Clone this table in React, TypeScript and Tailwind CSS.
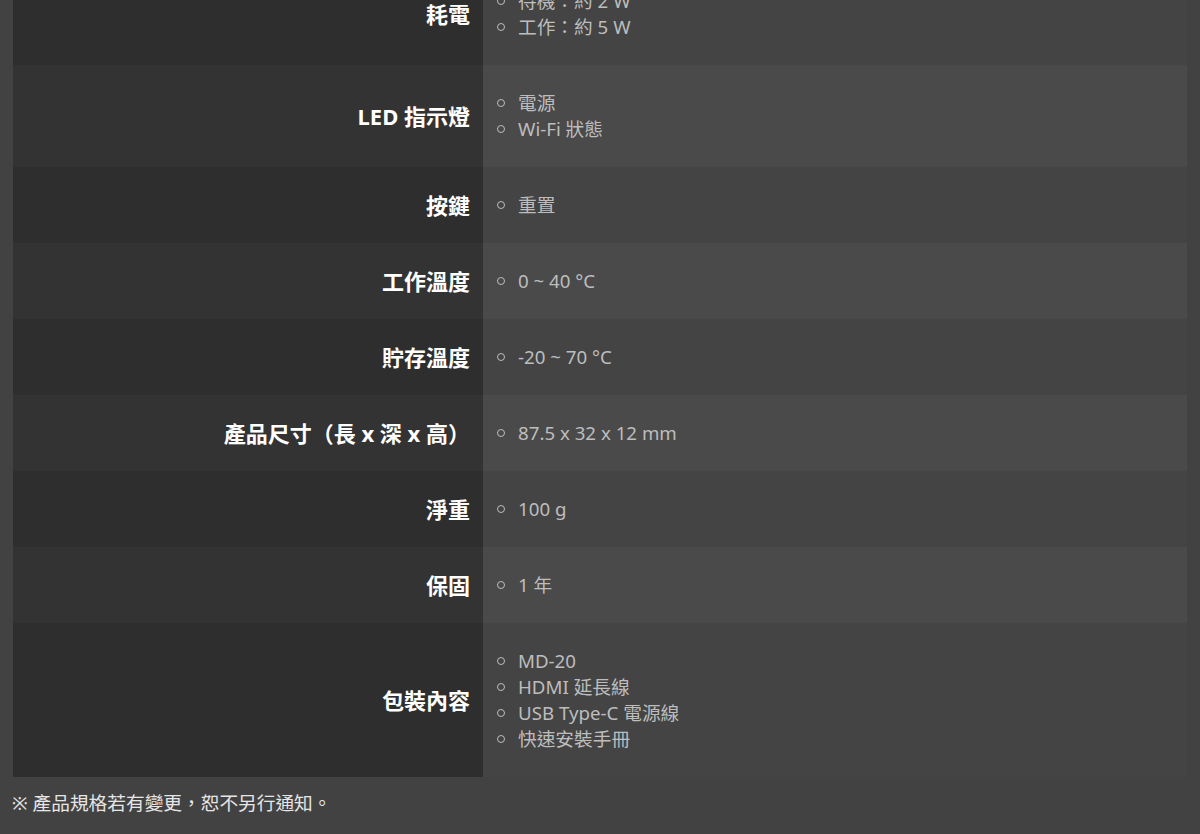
const rows: { label: string; items: string[] }[] = [
  { label: '耗電', items: ['待機：約 2 W', '工作：約 5 W'] },
  { label: 'LED 指示燈', items: ['電源', 'Wi-Fi 狀態'] },
  { label: '按鍵', items: ['重置'] },
  { label: '工作溫度', items: ['0 ~ 40 °C'] },
  { label: '貯存溫度', items: ['-20 ~ 70 °C'] },
  { label: '產品尺寸（長 x 深 x 高）', items: ['87.5 x 32 x 12 mm'] },
  { label: '淨重', items: ['100 g'] },
  { label: '保固', items: ['1 年'] },
  { label: '包裝內容', items: ['MD-20', 'HDMI 延長線', 'USB Type-C 電源線', '快速安裝手冊'] },
];

export default function App() {
  return (
    <div
      className="h-[834px] overflow-hidden bg-[#424242]"
      style={{ fontFamily: '"Noto Sans", "Noto Sans CJK TC", sans-serif' }}
    >
      {/* page is scrolled: the first row sits partly above the top edge */}
      <div className="-mt-[37px] mx-[13px]">
        {rows.map((row, i) => (
          <div key={row.label} className="flex">
            <div
              className={`w-[470px] shrink-0 flex items-center justify-end pr-[13px] text-[22px] font-bold text-white ${
                i % 2 === 1 ? 'bg-[#333333]' : 'bg-[#2e2e2e]'
              }`}
            >
              {row.label}
            </div>
            <ul
              className={`flex-1 py-[25px] pl-[14px] text-[18.7px] leading-[26px] text-[#bdbdbd] ${
                i % 2 === 1 ? 'bg-[#4a4a4a]' : 'bg-[#444444]'
              }`}
            >
              {row.items.map((item) => (
                <li key={item} className="flex items-center">
                  <span className="w-[8px] h-[8px] rounded-full border border-[#bdbdbd] mr-[13px]" />
                  <span>{item}</span>
                </li>
              ))}
            </ul>
          </div>
        ))}
      </div>
      <p className="px-[12px] pt-[13px] text-[18.7px] leading-[26px] text-[#e6e6e6]">
        ※ 產品規格若有變更，恕不另行通知。
      </p>
    </div>
  );
}
